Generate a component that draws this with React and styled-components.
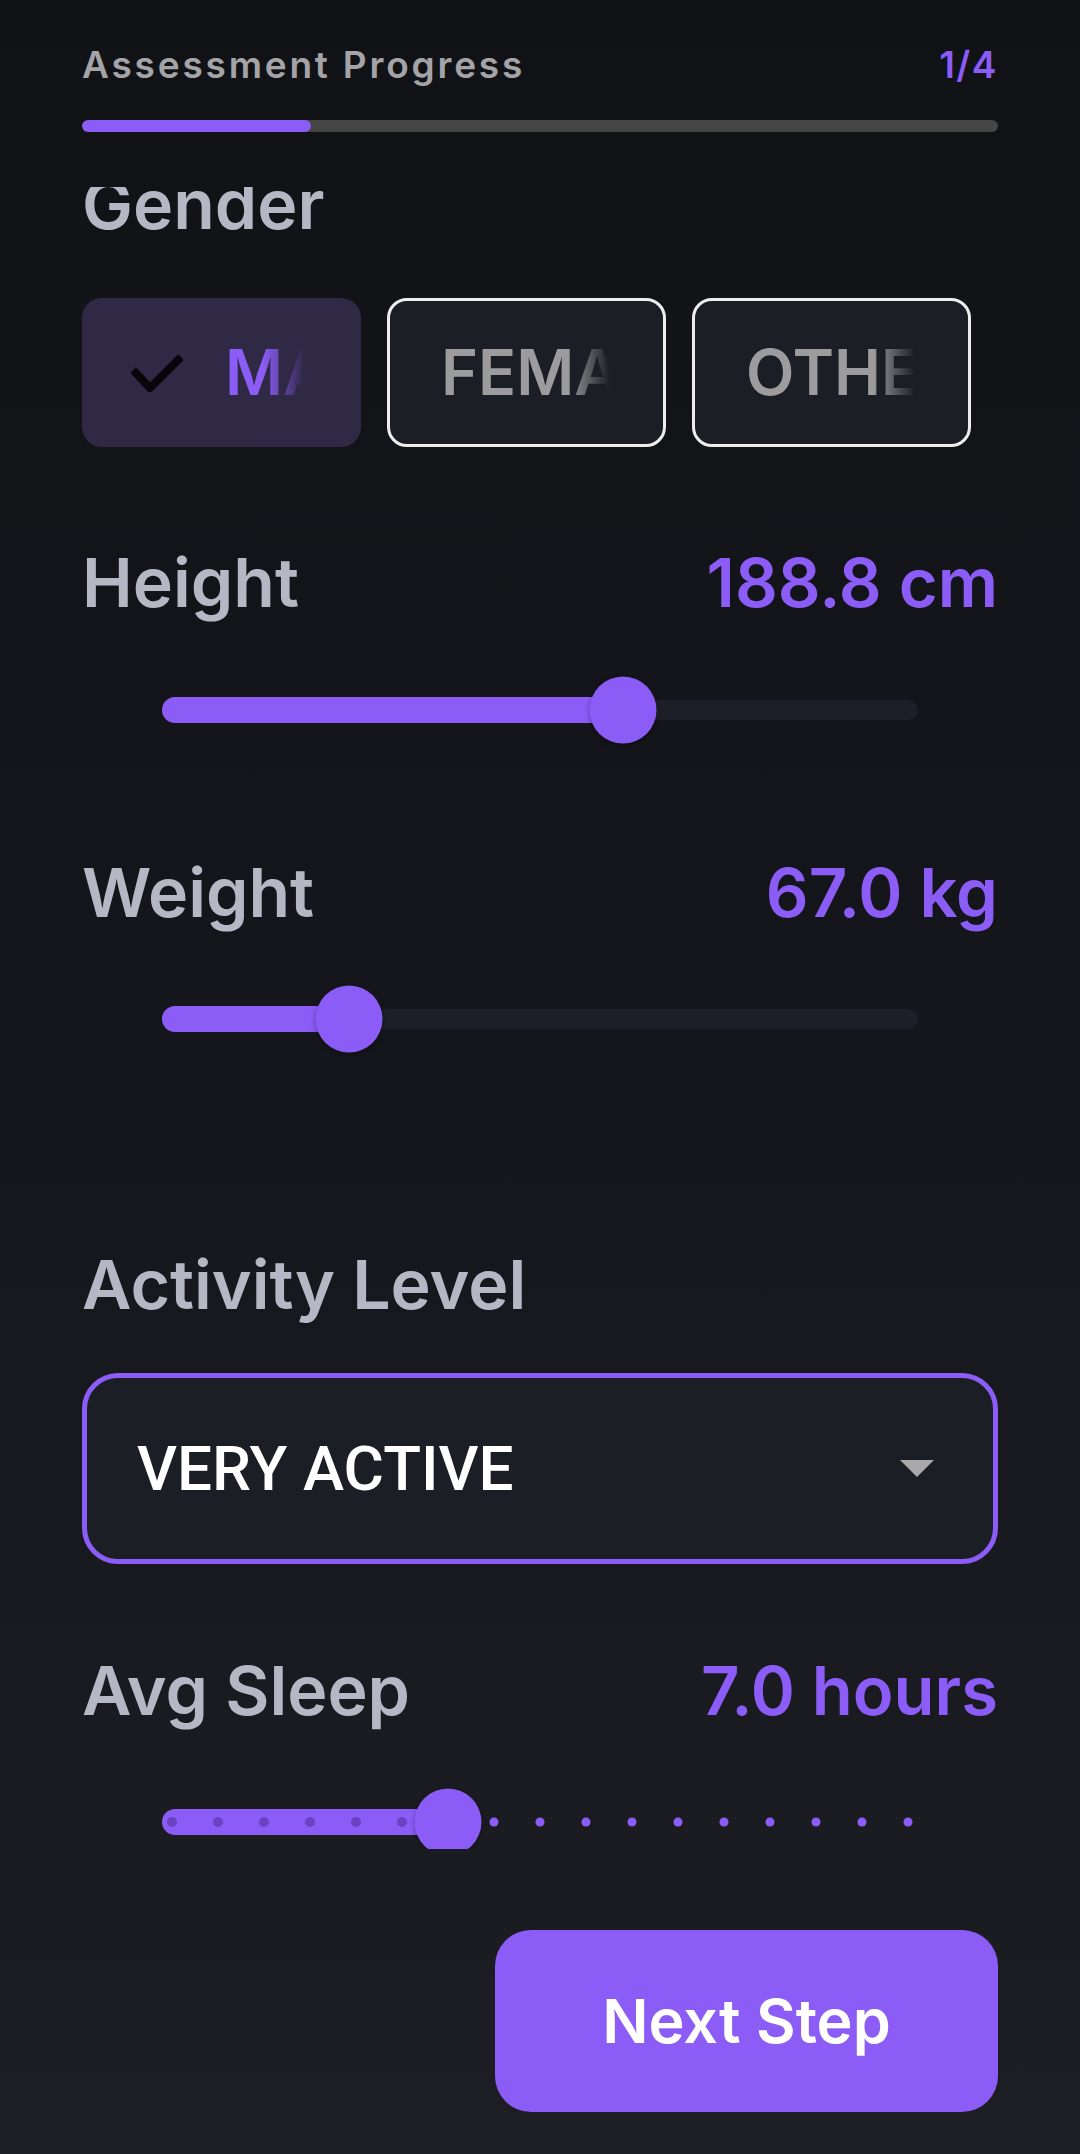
import { useLayoutEffect, useRef } from "react";
import styled, { createGlobalStyle } from "styled-components";

const GlobalStyle = createGlobalStyle`
    html, body {
        margin: 0;
        padding: 0;
        background: #111216;
    }
    * {
        box-sizing: border-box;
    }
`

const Page = styled.div`
    display: flex;
    flex-direction: column;
    height: 100vh;
    background: linear-gradient(180deg, #111216 0%, #15161b 45%, #1c1e24 100%);
    font-family: Inter, "Noto Sans", sans-serif;
    overflow: hidden;
`

const Header = styled.header`
    flex-shrink: 0;
    padding: 43px 82px 55px;
`

const HeaderRow = styled.div`
    display: flex;
    justify-content: space-between;
    align-items: baseline;
    font-size: 37px;
    line-height: 1.2;
    font-weight: 600;
`

const HeaderTitle = styled.span`
    color: #a4a4a8;
    letter-spacing: 2.8px;
`

const StepCount = styled.span`
    color: #8b5cf6;
    letter-spacing: 1.5px;
`

const ProgressTrack = styled.div`
    margin-top: 33px;
    height: 12px;
    border-radius: 6px;
    background: #454546;
    overflow: hidden;
`

const ProgressFill = styled.div`
    height: 100%;
    border-radius: 6px;
    background: #8b5cf6;
`

const ScrollArea = styled.main`
    flex: 1;
    overflow: hidden;
`

const Content = styled.div`
    padding: 0 82px 120px;
`

const Label = styled.h2`
    margin: ${p => p.$top || 0}px 0 0;
    font-size: 68px;
    line-height: 80px;
    font-weight: 600;
    color: #b5b8c4;
`

const LabelRow = styled.div`
    display: flex;
    justify-content: space-between;
    align-items: baseline;
    margin-top: ${p => p.$top || 0}px;
    height: 80px;
`

const RowLabel = styled.span`
    font-size: 68px;
    line-height: 80px;
    font-weight: 600;
    color: #b5b8c4;
`

const Value = styled.span`
    font-size: 67px;
    line-height: 80px;
    font-weight: 600;
    color: #8b5cf6;
`

const ChipRow = styled.div`
    display: flex;
    gap: 26px;
    margin-top: 54px;
`

const Chip = styled.button`
    display: flex;
    align-items: center;
    gap: 42px;
    flex-shrink: 0;
    width: 279px;
    height: 149px;
    margin: 0;
    padding: 0 53px 0 ${p => (p.$selected ? 46 : 51)}px;
    border: 3px solid ${p => (p.$selected ? "transparent" : "#ededed")};
    border-radius: 20px;
    background: ${p => (p.$selected ? "#2f2946" : "#1b1e25")};
    cursor: pointer;
`

const ChipLabel = styled.span`
    flex: 1;
    min-width: 0;
    overflow: hidden;
    white-space: nowrap;
    text-align: left;
    font-family: Inter, "Noto Sans", sans-serif;
    font-size: 63px;
    line-height: 1;
    font-weight: 600;
    color: ${p => (p.$selected ? "#8b5cf6" : "#9c9c9e")};
    -webkit-mask-image: linear-gradient(to right, #000 calc(100% - 42px), transparent);
    mask-image: linear-gradient(to right, #000 calc(100% - 42px), transparent);
`

const CheckIcon = styled.svg`
    flex-shrink: 0;
    width: 52px;
    height: 38px;
`

const SliderBox = styled.div`
    position: relative;
    display: flex;
    align-items: center;
    height: 96px;
    margin: ${p => p.$top || 0}px 80px 0;
`

const ActiveTrack = styled.div`
    flex-shrink: 0;
    height: 26px;
    border-radius: 13px 0 0 13px;
    background: #8b5cf6;
`

const InactiveTrack = styled.div`
    flex: 1;
    height: 20px;
    border-radius: 0 10px 10px 0;
    background: ${p => (p.$faint ? "transparent" : "#1c1f27")};
`

const Tick = styled.span`
    position: absolute;
    top: 50%;
    width: ${p => (p.$active ? 10 : 9)}px;
    height: ${p => (p.$active ? 10 : 9)}px;
    border-radius: 50%;
    background: ${p => (p.$active ? "#6a43c2" : "#8b5cf6")};
    transform: translate(-50%, -50%);
`

const Thumb = styled.span`
    position: absolute;
    top: 50%;
    width: 67px;
    height: 67px;
    border-radius: 50%;
    background: #8b5cf6;
    box-shadow: 0 2px 5px rgba(0, 0, 0, 0.35);
    transform: translate(-50%, -50%);
`

const Select = styled.div`
    display: flex;
    align-items: center;
    justify-content: space-between;
    height: 191px;
    margin-top: 49px;
    padding: 0 59px 0 50px;
    border: 5px solid #8b5cf6;
    border-radius: 36px;
    background: #1b1e25;
`

const SelectText = styled.span`
    font-family: Roboto, "Liberation Sans", sans-serif;
    font-size: 62px;
    font-weight: 500;
    color: #ffffff;
`

const BottomBar = styled.footer`
    flex-shrink: 0;
    display: flex;
    justify-content: flex-end;
    padding: 81px 82px 42px;
`

const NextButton = styled.button`
    width: 503px;
    height: 182px;
    margin: 0;
    border: none;
    border-radius: 36px;
    background: #8b5cf6;
    color: #ffffff;
    font-family: Inter, "Noto Sans", sans-serif;
    font-size: 61px;
    font-weight: 600;
    cursor: pointer;
`

// position of a value along the track, thumb centre inset by 10px on each side
const trackPos = (value, min, max) => {
    const f = (value - min) / (max - min);
    return `calc(10px + ${f} * (100% - 20px))`;
}

const Slider = ({ value, min, max, divisions, top }) => {
    const pos = trackPos(value, min, max);
    const ticks = [];
    if (divisions) {
        for (let i = 0; i <= divisions; i++) {
            const tickValue = min + (i * (max - min)) / divisions;
            ticks.push(
                <Tick
                    key={i}
                    $active={tickValue < value}
                    style={{ left: trackPos(tickValue, min, max) }}
                />
            );
        }
    }
    return (
        <SliderBox $top={top}>
            <ActiveTrack style={{ width: pos }} />
            <InactiveTrack $faint={!!divisions} />
            {ticks}
            <Thumb style={{ left: pos }} />
        </SliderBox>
    );
}

const genders = ["MALE", "FEMALE", "OTHER"];

const App = () => {
    const scrollRef = useRef(null);

    // the form is scrolled a little, so the first title sits under the header
    useLayoutEffect(() => {
        if (scrollRef.current) scrollRef.current.scrollTop = 23;
    }, []);

    return (
        <Page>
            <GlobalStyle />
            <Header>
                <HeaderRow>
                    <HeaderTitle>Assessment Progress</HeaderTitle>
                    <StepCount>1/4</StepCount>
                </HeaderRow>
                <ProgressTrack>
                    <ProgressFill style={{ width: "25%" }} />
                </ProgressTrack>
            </Header>

            <ScrollArea ref={scrollRef}>
                <Content>
                    <Label>Gender</Label>
                    <ChipRow>
                        {genders.map((g, i) => (
                            <Chip key={g} $selected={i === 0}>
                                {i === 0 && (
                                    <CheckIcon viewBox="0 0 52 38">
                                        <polyline
                                            points="2,16 19,34 50,3"
                                            fill="none"
                                            stroke="#07070b"
                                            strokeWidth="8"
                                        />
                                    </CheckIcon>
                                )}
                                <ChipLabel $selected={i === 0}>{g}</ChipLabel>
                            </Chip>
                        ))}
                    </ChipRow>

                    <LabelRow $top={95}>
                        <RowLabel>Height</RowLabel>
                        <Value>188.8 cm</Value>
                    </LabelRow>
                    <Slider value={188.8} min={100} max={245} top={40} />

                    <LabelRow $top={94}>
                        <RowLabel>Weight</RowLabel>
                        <Value>67.0 kg</Value>
                    </LabelRow>
                    <Slider value={67} min={40} max={152} top={39} />

                    <Label $top={177}>Activity Level</Label>
                    <Select>
                        <SelectText>VERY ACTIVE</SelectText>
                        <svg width="34" height="17" viewBox="0 0 34 17">
                            <polygon points="0,0 34,0 17,17" fill="#a9a9ab" />
                        </svg>
                    </Select>

                    <LabelRow $top={86}>
                        <RowLabel>Avg Sleep</RowLabel>
                        <Value>7.0 hours</Value>
                    </LabelRow>
                    <Slider value={7} min={4} max={12} divisions={16} top={44} />
                </Content>
            </ScrollArea>

            <BottomBar>
                <NextButton>Next Step</NextButton>
            </BottomBar>
        </Page>
    );
}

export default App;
